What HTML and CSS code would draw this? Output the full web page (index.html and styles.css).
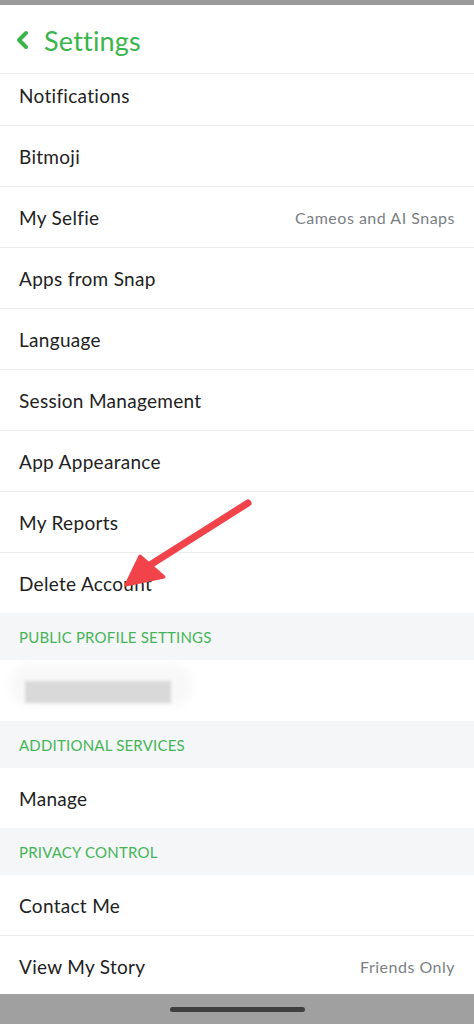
FILE: index.html
```html
<!DOCTYPE html>
<html lang="en">
<head>
    <meta charset="UTF-8">
    <meta name="viewport" content="width=device-width, initial-scale=1.0">
    <title>Settings</title>
    <link rel="stylesheet" href="styles.css">
</head>
<body>
    <div class="status-strip"></div>

    <div class="header">
        <svg class="back" width="16" height="20" viewBox="0 0 16 20">
            <path d="M12 3 L5 10 L12 17" fill="none" stroke="#3ab54c" stroke-width="4" stroke-linecap="round" stroke-linejoin="round"/>
        </svg>
        <h1>Settings</h1>
    </div>

    <div class="scroll">
        <div class="list">
            <div class="row">Notifications</div>
            <div class="row">Bitmoji</div>
            <div class="row">My Selfie <span class="value">Cameos and AI Snaps</span></div>
            <div class="row">Apps from Snap</div>
            <div class="row">Language</div>
            <div class="row">Session Management</div>
            <div class="row">App Appearance</div>
            <div class="row">My Reports</div>
            <div class="row last">Delete Account</div>

            <div class="section">PUBLIC PROFILE SETTINGS</div>
            <div class="row last blurred-row">
                <div class="blur-glow"></div>
                <div class="blur-block"></div>
            </div>

            <div class="section">ADDITIONAL SERVICES</div>
            <div class="row last">Manage</div>

            <div class="section">PRIVACY CONTROL</div>
            <div class="row">Contact Me</div>
            <div class="row last">View My Story <span class="value">Friends Only</span></div>
        </div>

        <!-- annotation arrow drawn on top of the screenshot -->
        <svg class="annotation" width="474" height="700" viewBox="0 0 474 700">
            <line x1="248" y1="429" x2="150" y2="491" stroke="#f2434a" stroke-width="7" stroke-linecap="round"/>
            <polygon points="126,511 140,482 164,503" fill="#f2434a" stroke="#f2434a" stroke-width="3" stroke-linejoin="round"/>
        </svg>
    </div>

    <div class="home-bar">
        <div class="home-indicator"></div>
    </div>
</body>
</html>
```

FILE: styles.css
```css
body {
    font-family: Lato, "Open Sans", sans-serif;
    margin: 0;
    padding: 0;
    background-color: white;
    color: #222;
    width: 474px;
    height: 1024px;
    display: flex;
    flex-direction: column;
    overflow: hidden;
}

.status-strip {
    height: 5px;
    background-color: #9b9b9b;
}

.header {
    height: 68px;
    border-bottom: 1px solid #ececec;
    display: flex;
    align-items: center;
    padding-left: 14px;
    gap: 14px;
}

.back {
    margin-top: 2px;
}

.header h1 {
    margin: 0;
    margin-top: 2px;
    font-size: 27px;
    font-weight: 400;
    color: #3ab54c;
    letter-spacing: 0.2px;
}

.scroll {
    flex: 1;
    overflow: hidden;
    position: relative;
}

.list {
    margin-top: -9px;
}

.row {
    height: 60px;
    border-bottom: 1px solid #ececec;
    display: flex;
    align-items: center;
    justify-content: space-between;
    padding: 0 19px;
    font-size: 19px;
    letter-spacing: 0.3px;
    color: #222;
}

.row.last {
    border-bottom: none;
}

.value {
    font-size: 16px;
    letter-spacing: 0.5px;
    color: #7a7f86;
}

.section {
    height: 47px;
    background-color: #f5f6f8;
    display: flex;
    align-items: center;
    padding: 0 19px;
    font-size: 15px;
    letter-spacing: 0.2px;
    color: #44b556;
}

.blurred-row {
    position: relative;
    height: 61px;
}

.blur-glow {
    position: absolute;
    left: 10px;
    top: 4px;
    width: 182px;
    height: 42px;
    border-radius: 20px;
    background-color: #f8f8f8;
    filter: blur(4px);
}

.blur-block {
    position: absolute;
    left: 25px;
    top: 21px;
    width: 146px;
    height: 22px;
    background-color: #d9d9d9;
    filter: blur(1.5px);
}

.annotation {
    position: absolute;
    left: 0;
    top: 0;
    pointer-events: none;
}

.home-bar {
    height: 30px;
    background-color: #a0a0a0;
    display: flex;
    justify-content: center;
    padding-top: 13px;
    box-sizing: border-box;
}

.home-indicator {
    width: 135px;
    height: 5px;
    border-radius: 3px;
    background-color: #3f3f3f;
}
```
